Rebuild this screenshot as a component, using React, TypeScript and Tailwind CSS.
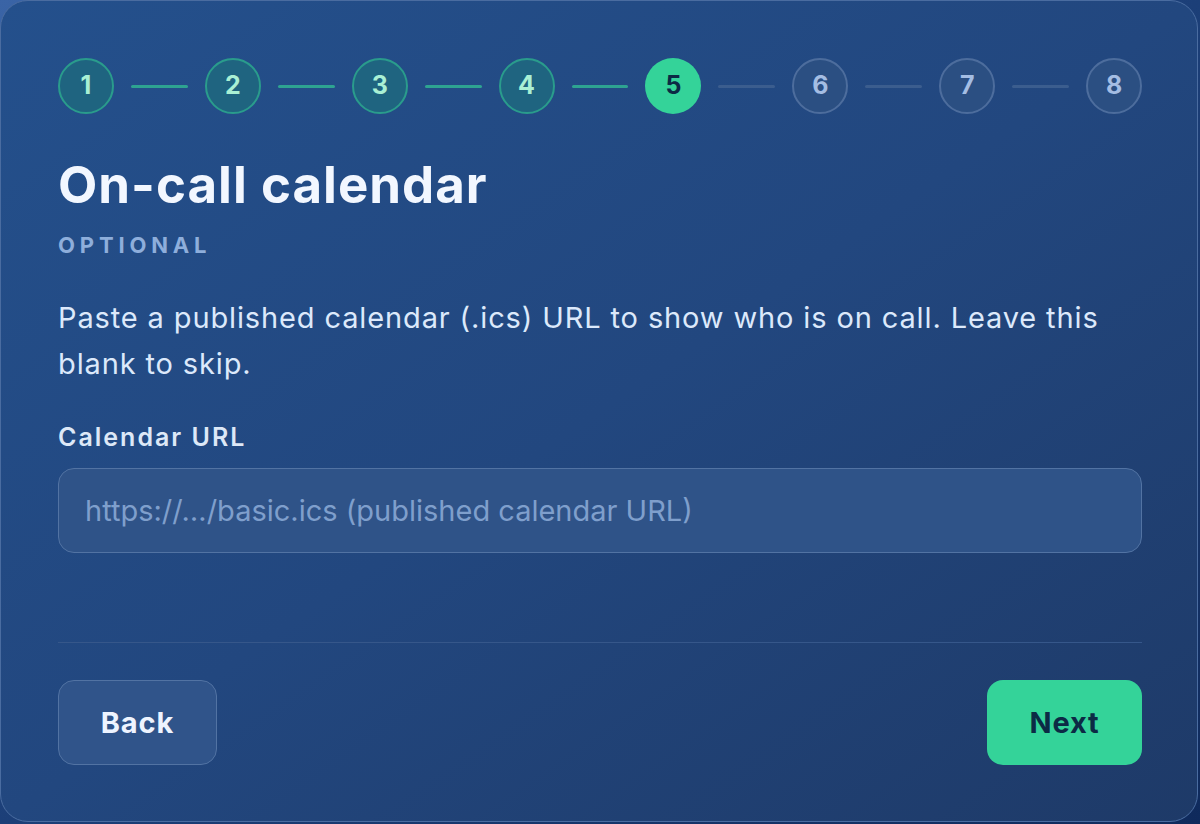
const steps = [1, 2, 3, 4, 5, 6, 7, 8]
const current = 5

function StepDot({ n }: { n: number }) {
  if (n < current) {
    return (
      <div className="flex h-[56px] w-[56px] shrink-0 items-center justify-center rounded-full border-2 border-[#2a9c8c] bg-[#1f6480] text-[25px] font-bold text-[#a9f0d4]">
        {n}
      </div>
    )
  }
  if (n === current) {
    return (
      <div className="flex h-[56px] w-[56px] shrink-0 items-center justify-center rounded-full bg-[#34d399] text-[25px] font-bold text-[#0c2a45]">
        {n}
      </div>
    )
  }
  return (
    <div className="flex h-[56px] w-[56px] shrink-0 items-center justify-center rounded-full border-2 border-[#4d6d9d] bg-[#2b4f82] text-[25px] font-bold text-[#a4bde3]">
      {n}
    </div>
  )
}

export default function App() {
  return (
    <div className="h-[824px] w-[1200px] overflow-hidden bg-gradient-to-br from-[#3a64a6] via-[#1c3f78] to-[#0f2a5c] font-['Inter',sans-serif]">
      <div className="flex h-[822px] w-[1198px] flex-col rounded-[28px] border border-[#4a6ca0] bg-gradient-to-br from-[#24508c] via-[#22477f] to-[#1e3a68] pt-[57px] pr-[55px] pb-[56px] pl-[57px]">
        <div className="flex items-center">
          {steps.map((n, i) => (
            <div key={n} className={i < steps.length - 1 ? 'flex flex-1 items-center' : 'flex items-center'}>
              <StepDot n={n} />
              {i < steps.length - 1 && (
                <div
                  className={
                    n < current
                      ? 'mx-[17px] h-[3px] flex-1 rounded-full bg-[#2ea391]'
                      : 'mx-[17px] h-[3px] flex-1 rounded-full bg-[#3b5d8e]'
                  }
                />
              )}
            </div>
          ))}
        </div>

        <h1 className="mt-[43px] text-[51px] leading-[56px] font-bold tracking-[0.02em] text-[#f2f7ff]">On-call calendar</h1>
        <div className="mt-[18px] text-[22px] leading-[28px] font-bold tracking-[0.22em] text-[#8eaedb]">OPTIONAL</div>

        <p className="mt-[36px] text-[29px] leading-[46px] tracking-[0.03em] text-[#dce9fb]">
          Paste a published calendar (.ics) URL to show who is on call. Leave this blank to skip.
        </p>

        <label className="mt-[34px] text-[25px] leading-[32px] font-semibold tracking-[0.08em] text-[#dde8f7]">Calendar URL</label>
        <input
          placeholder="https://…/basic.ics (published calendar URL)"
          className="mt-[15px] h-[85px] w-full shrink-0 rounded-[16px] border border-[#5273a3] bg-[#2f5388] px-[26px] text-[29px] text-[#dce9fb] outline-none placeholder:text-[#7f9fcc]"
        />

        <div className="mt-auto border-t border-[#36578a]" />

        <div className="mt-[37px] flex items-center justify-between">
          <button className="h-[85px] w-[159px] rounded-[16px] border border-[#5273a3] bg-[#30548a] text-[29px] font-bold tracking-[0.03em] text-[#eef4ff]">
            Back
          </button>
          <button className="h-[85px] w-[155px] rounded-[16px] bg-[#34d399] text-[29px] font-bold tracking-[0.03em] text-[#0c2a45]">
            Next
          </button>
        </div>
      </div>
    </div>
  )
}
